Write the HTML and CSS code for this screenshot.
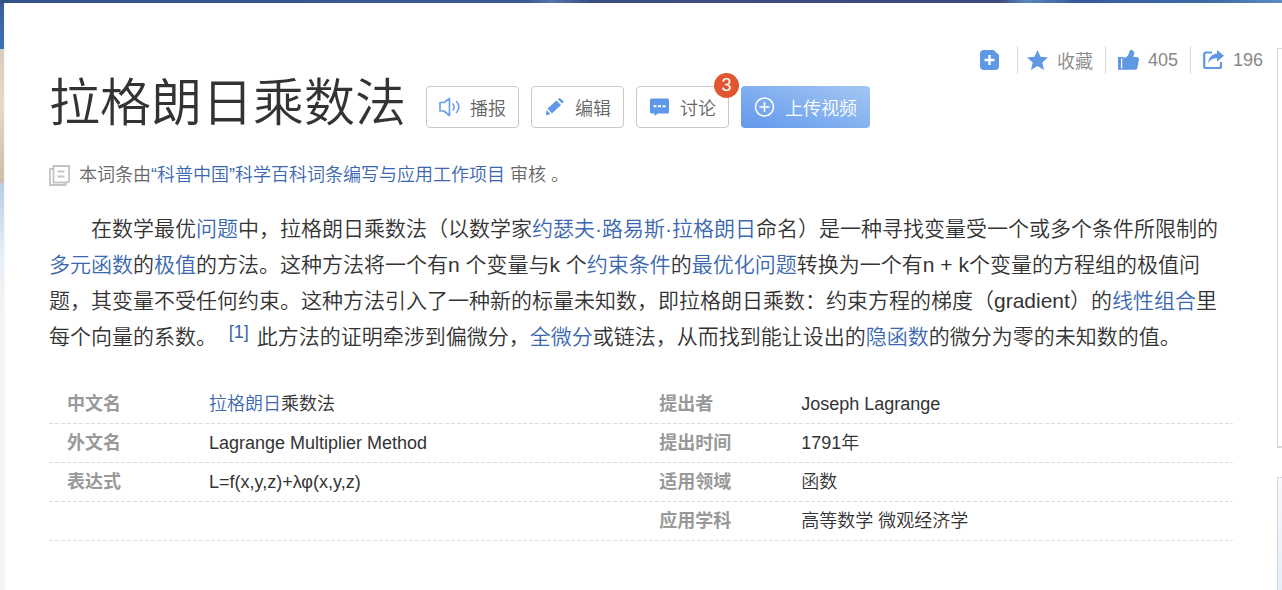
FILE: index.html
```html
<!DOCTYPE html>
<html lang="zh-CN">
<head>
<meta charset="utf-8">
<meta name="viewport" content="width=device-width, initial-scale=1">
<title>拉格朗日乘数法</title>
<link rel="stylesheet" href="styles.css">
</head>
<body>
<div class="banner"></div>
<div class="page">
  <div class="rail"><div class="rail-sky"></div><div class="rail-sand"></div><div class="rail-mist"></div></div>
  <main class="entry">
    <div class="tools">
      <button class="tool tool-add" type="button" aria-label="添加">
        <svg width="19" height="20" viewBox="0 0 19 20"><path d="M4 0h9.500L19 5v11a4 4 0 0 1-4 4H4a4 4 0 0 1-4-4V4a4 4 0 0 1 4-4z" fill="#5f98e3"/><path d="M9.500 5v10M4.500 10h10" stroke="#fff" stroke-width="2.400"/></svg>
      </button>
      <button class="tool tool-star" type="button">
        <svg width="21" height="20" viewBox="0 0 21 20"><path d="M10.500 0l3 6.800 7.500.7-5.700 4.900 1.800 7.600-6.600-4-6.600 4 1.800-7.600L0 7.500l7.500-.7z" fill="#5f98e3"/></svg>
        <span>收藏</span>
      </button>
      <button class="tool tool-like" type="button">
        <svg width="21" height="20" viewBox="0 0 21 20"><path d="M0 7h5.500v12.800H0zM7 7.800C9.700 6.500 11 4.500 11.400 1.500 11.600.4 12.400 0 13.400 0c2.200 0 3 2 2.600 4.200L15.300 7h3.500c1.500 0 2.400 1.300 2.100 2.700l-1.500 8c-.3 1.400-1.300 2.100-2.600 2.100H5.500V7.800z" fill="#5f98e3"/><path d="M3.600 8.500v9.800" stroke="#fff" stroke-width="1.300"/></svg>
        <span>405</span>
      </button>
      <button class="tool tool-share" type="button">
        <svg width="21" height="20" viewBox="0 0 21 20"><path d="M9 2.500H3A1.800 1.800 0 0 0 1.200 4.300V16.200A1.800 1.800 0 0 0 3 18h13.200a1.800 1.800 0 0 0 1.800-1.800V12" fill="none" stroke="#5f98e3" stroke-width="2.200"/><path d="M14 0l7 5.800-7 6V8.300c-4 0-6.500 1.300-8.800 4.700C5.700 7.500 9 4 14 3.500z" fill="#5f98e3"/></svg>
        <span>196</span>
      </button>
    </div>

    <header class="heading">
      <h1 class="title">拉格朗日乘数法</h1>
      <div class="actions">
        <button class="action" type="button">
          <svg width="22" height="20" viewBox="0 0 22 20"><g fill="none" stroke="#70a0e8" stroke-width="1.700" stroke-linejoin="round"><path d="M1 5.500h4l5.500-4v17L5 14H1z"/><path d="M14 7c1.300 1.600 1.300 4.400 0 6M17.500 4.500c3 3 3 8 0 11" stroke-linecap="round"/></g></svg>
          <span>播报</span>
        </button>
        <button class="action" type="button">
          <svg width="22" height="20" viewBox="0 0 22 20"><path d="M3.500 11.500L12.500 3.500l4.500 4.500-9 8.500z" fill="#5f98eb"/><path d="M14 2.500L15.800.7l4 4-1.800 1.800zM2.500 13L6.500 17 2 18.600z" fill="#5f98eb"/></svg>
          <span>编辑</span>
        </button>
        <button class="action" type="button">
          <svg width="22" height="20" viewBox="0 0 22 20"><path d="M2.500 1.500h16a1.500 1.500 0 0 1 1.500 1.500v12a1.500 1.500 0 0 1-1.500 1.500H9L5.500 19v-2.500h-3A1.500 1.500 0 0 1 1 15V3a1.500 1.500 0 0 1 1.500-1.500z" fill="#5f98eb"/><path d="M4.500 8.300h3v2h-3zM9 8.300h3v2H9zM13.500 8.300h3v2h-3z" fill="#fff"/></svg>
          <span>讨论</span>
          <span class="badge">3</span>
        </button>
        <button class="action action-primary" type="button">
          <svg width="22" height="20" viewBox="0 0 22 20"><g fill="none" stroke="#fff" stroke-width="1.500"><circle cx="10.500" cy="10" r="9"/><path d="M10.500 5v10M5.500 10h10"/></g></svg>
          <span>上传视频</span>
        </button>
      </div>
    </header>

    <p class="review">
      <svg width="21" height="21" viewBox="0 0 21 21"><g fill="none" stroke="#c4c4c4" stroke-width="1.800"><path d="M4.500 1h15.500v15.500l-2 1H4.500z"/><path d="M4 4H1v16h15.500v-2"/><path d="M8.500 6.500h7M8.500 11.500h7" stroke-width="2"/></g></svg>
      <span>本词条由<a href="#science">“科普中国”科学百科词条编写与应用工作项目</a> 审核 。</span>
    </p>

    <p class="summary">在数学最优<a href="#problem">问题</a>中，拉格朗日乘数法（以数学家<a href="#lagrange">约瑟夫·路易斯·拉格朗日</a>命名）是一种寻找变量受一个或多个条件所限制的<a href="#multivariate">多元函数</a>的<a href="#extremum">极值</a>的方法。这种方法将一个有n 个变量与k 个<a href="#constraint">约束条件</a>的<a href="#optimization">最优化问题</a>转换为一个有n + k个变量的方程组的极值问题，其变量不受任何约束。这种方法引入了一种新的标量未知数，即拉格朗日乘数：约束方程的梯度（gradient）的<a href="#linear">线性组合</a>里每个向量的系数。 <sup class="cite"><a href="#ref1">[1]</a></sup> 此方法的证明牵涉到偏微分，<a href="#total">全微分</a>或链法，从而找到能让设出的<a href="#implicit">隐函数</a>的微分为零的未知数的值。</p>

    <table class="facts">
      <tbody>
        <tr><th scope="row">中文名</th><td class="wide"><a href="#lagrange-name">拉格朗日</a>乘数法</td><th scope="row">提出者</th><td>Joseph Lagrange</td></tr>
        <tr><th scope="row">外文名</th><td class="wide">Lagrange Multiplier Method</td><th scope="row">提出时间</th><td>1791年</td></tr>
        <tr><th scope="row">表达式</th><td class="wide">L=f(x,y,z)+λφ(x,y,z)</td><th scope="row">适用领域</th><td>函数</td></tr>
        <tr><td></td><td class="wide"></td><th scope="row">应用学科</th><td>高等数学 微观经济学</td></tr>
      </tbody>
    </table>
  </main>
  <aside class="side"><div class="side-card"></div><div class="side-panel"></div></aside>
</div>
</body>
</html>
```
FILE: styles.css
```css
* {
  box-sizing: border-box;
}

body {
  margin: 0;
  min-height: 100vh;
  display: flex;
  flex-direction: column;
  background: #fff;
  color: #333;
  font-family: "Liberation Sans", "Noto Sans CJK SC", sans-serif;
  font-weight: 350;
}

a {
  color: #3a68b0;
  text-decoration: none;
}

button {
  font: inherit;
  cursor: pointer;
}

svg {
  display: block;
  flex: none;
}

.banner {
  height: 3px;
  background: linear-gradient(90deg, #355189 0%, #3d5a92 41%, #5675aa 43%, #3c4f83 46%, #3b4b80 78%, #5b87bd 80%, #355b98 84%, #3f6ca6 95%, #5c8dc2 100%);
}

.page {
  flex: 1;
  display: grid;
  grid-template-columns: 4px 1fr 5px;
}

.rail {
  display: flex;
  flex-direction: column;
}

.rail-sky {
  height: 46px;
  background: linear-gradient(#3c5b97, #3c74b2);
}

.rail-sand {
  height: 134px;
  background: linear-gradient(#d9cabb, #ead9c6 40%, #cdbca6);
}

.rail-mist {
  flex: 1;
  background: linear-gradient(#b9cee4, #e8eff7 70px, #f3f4f6 130px);
}

.entry {
  padding: 43px 0 48px 44px;
  border-left: 1px solid #f3f5f8;
}

.tools {
  display: flex;
  justify-content: flex-end;
  padding-right: 14px;
}

.tool {
  display: flex;
  align-items: center;
  gap: 9px;
  height: 28px;
  padding: 0 12px;
  border: 0;
  border-left: 1px solid #d8d8d8;
  background: none;
  color: #888;
  font-size: 18px;
}

.tool-add {
  padding: 0 18px 0 0;
  border-left: 0;
}

.tool-star {
  padding-left: 9px;
}

.tool-share {
  padding-right: 0;
}

.heading {
  display: flex;
  align-items: center;
  gap: 20px;
}

.title {
  margin: 0;
  font-size: 51px;
  font-weight: 350;
  line-height: 60px;
}

.actions {
  display: flex;
  gap: 12px;
  padding-top: 6px;
}

.action {
  position: relative;
  display: flex;
  align-items: center;
  gap: 9px;
  height: 42px;
  padding: 0 12px;
  border: 1px solid #c9c9c9;
  border-radius: 4px;
  background: #fff;
  color: #666;
  font-size: 18px;
}

.action-primary {
  padding: 0 13px;
  border: 0;
  background: linear-gradient(20deg, #6299ec, #a4c7f3);
  color: #fff;
}

.badge {
  position: absolute;
  top: -14px;
  right: -11px;
  width: 25px;
  height: 25px;
  border-radius: 50%;
  background: #df5630;
  color: #fff;
  line-height: 25px;
  text-align: center;
}

.review {
  display: flex;
  align-items: center;
  gap: 9px;
  margin: 28px 0 0;
  color: #666;
  font-size: 18px;
  line-height: 27px;
}

.summary {
  margin: 22px 44px 0 0;
  font-size: 21px;
  line-height: 36px;
  text-indent: 2em;
}

.cite {
  margin: 0 2px 0 6px;
  font-size: 18px;
  line-height: 0;
  vertical-align: 6px;
}

.facts {
  width: calc(100% - 44px);
  margin-top: 30px;
  border-collapse: collapse;
  table-layout: fixed;
  font-size: 18px;
  line-height: 26px;
}

.facts tr {
  background: repeating-linear-gradient(90deg, #dcdcdc 0 4px, transparent 4px 6px) left bottom / 100% 1px no-repeat;
}

.facts th,
.facts td {
  height: 39px;
  padding: 6px 0 7px;
  text-align: left;
}

.facts th {
  padding-left: 18px;
  color: #999;
  font-weight: 700;
}

.facts th,
.facts td:first-child {
  width: 160px;
}

.facts .wide {
  width: 36.5%;
}

.side {
  display: flex;
  flex-direction: column;
  gap: 29px;
  padding-top: 45px;
}

.side-card {
  height: 400px;
  border: 1px solid #d9d9d9;
  border-right: 0;
  border-bottom: 2px solid #d9d9d9;
}

.side-panel {
  flex: 1;
  border: 1px solid #d3dae0;
  border-width: 1px 0 0 1px;
  background: linear-gradient(#f6f9fd, #e4eef9);
}
```
